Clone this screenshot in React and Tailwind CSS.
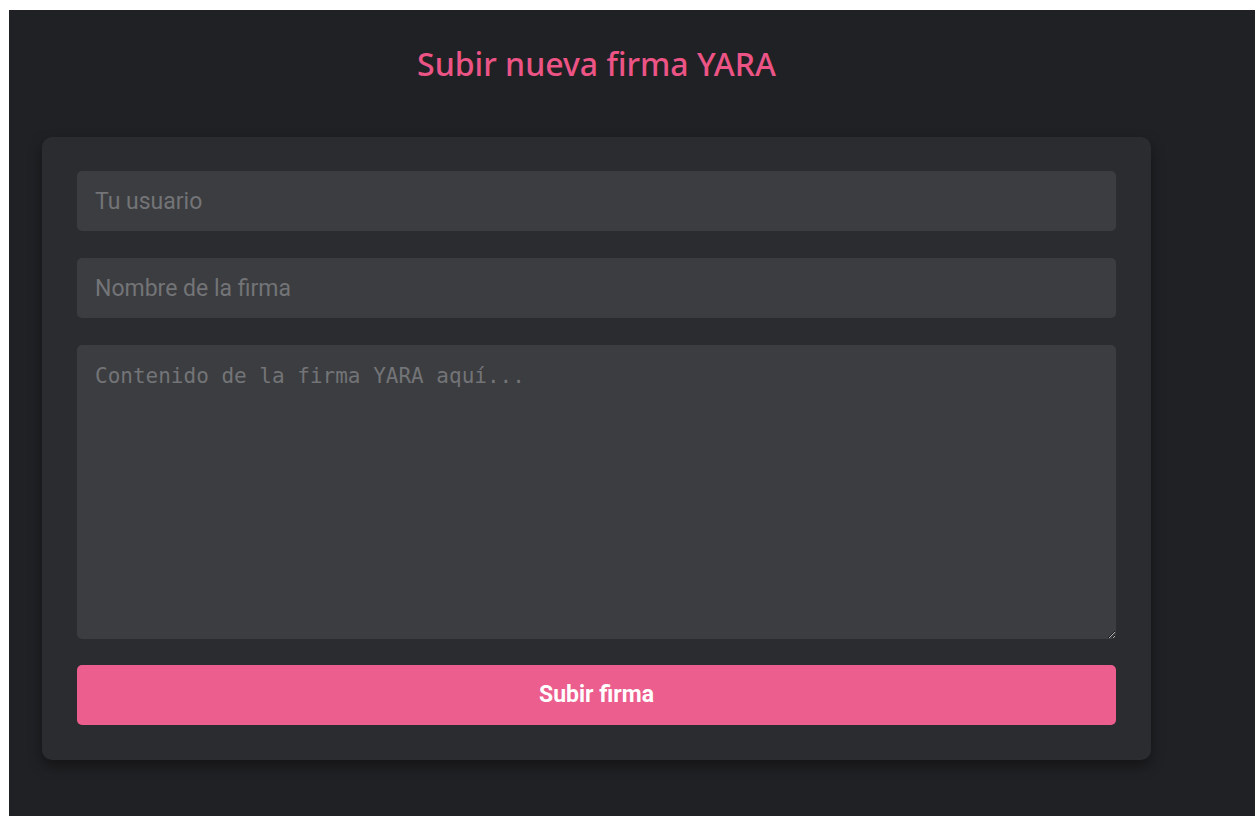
export default function App() {
  const field =
    "h-[60px] w-full rounded-[5px] bg-[#3c3d40] px-[18px] text-[23px] text-[#dddddd] placeholder:text-[#737477] outline-none font-['Roboto',Arial,sans-serif]";

  return (
    <div className="min-h-[816px] bg-white pt-[10px] pl-[9px]">
      <div className="min-h-[806px] bg-[#202124] pl-[33px] pr-[104px] pt-[33px] pb-[56px]">
        <div className="w-[1109px]">
          <h1 className="text-center text-[32px] leading-[42px] font-medium text-[#ec5486] font-['Noto_Sans',sans-serif]">
            Subir nueva firma YARA
          </h1>
          <form
            className="mt-[52px] flex flex-col gap-[27px] rounded-[10px] bg-[#2b2c2f] px-[35px] pt-[34px] pb-[35px] shadow-[0_6px_14px_rgba(0,0,0,0.4)]"
            onSubmit={(e) => e.preventDefault()}
          >
            <input type="text" placeholder="Tu usuario" className={field} />
            <input type="text" placeholder="Nombre de la firma" className={field} />
            <textarea
              placeholder="Contenido de la firma YARA aquí..."
              className="h-[294px] w-full rounded-[5px] bg-[#3c3d40] p-[18px] text-[21px] leading-[26px] text-[#dddddd] placeholder:text-[#737477] outline-none font-['DejaVu_Sans_Mono','Liberation_Mono',monospace]"
            />
            <button
              type="submit"
              className="-mt-px h-[60px] w-full rounded-[5px] bg-[#eb5e8d] text-[23px] font-bold text-white font-['Roboto',Arial,sans-serif]"
            >
              Subir firma
            </button>
          </form>
        </div>
      </div>
    </div>
  );
}
